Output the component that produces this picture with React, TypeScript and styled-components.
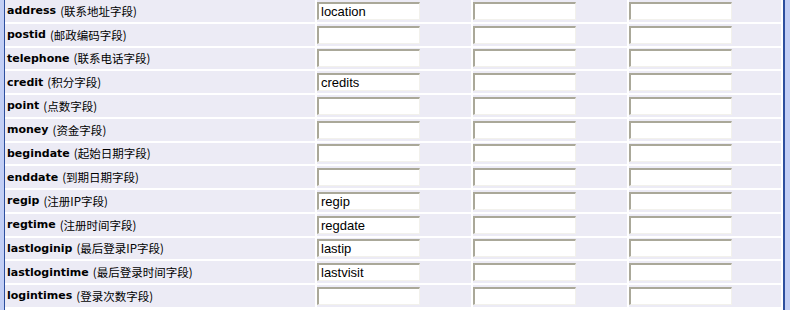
import React from 'react';
import styled, { createGlobalStyle } from 'styled-components';

const GlobalStyle = createGlobalStyle`
  html, body {
    margin: 0;
    padding: 0;
    background: #ffffff;
  }
`;

const Page = styled.div`
  width: 790px;
  height: 310px;
  overflow: hidden;
  box-sizing: border-box;
  background: #c3cff5;
  padding: 0 5px 0 4px;
`;

const Frame = styled.div`
  height: 100%;
  box-sizing: border-box;
  border-left: 1px solid #2d4f9e;
  border-right: 2px solid #2d4f9e;
  background: #ffffff;
`;

const Grid = styled.div`
  display: grid;
  grid-template-columns: 310px 154px 154px 152px;
  grid-auto-rows: 21.75px;
  column-gap: 2px;
  row-gap: 2px;
  padding-right: 1px;
`;

const LabelCell = styled.div`
  display: flex;
  align-items: center;
  padding-left: 2px;
  background: #ecebf5;
  color: #000000;
  white-space: nowrap;
`;

const Key = styled.span`
  font-family: "DejaVu Sans", Verdana, sans-serif;
  font-weight: bold;
  font-size: 11px;
`;

const Note = styled.span`
  margin-left: 4px;
  font-family: "Noto Sans CJK SC", "DejaVu Sans", sans-serif;
  font-size: 11.5px;
`;

const InputCell = styled.div`
  display: flex;
  align-items: center;
  background: #ecebf5;
`;

const Field = styled.input`
  box-sizing: border-box;
  width: 103px;
  height: 18px;
  margin: 0;
  padding: 0 2px;
  background: #ffffff;
  border-style: solid;
  border-width: 2px 1px 1px 2px;
  border-color: #aaa899 #f2f1ec #f2f1ec #aaa899;
  font-family: "Liberation Sans", Arial, sans-serif;
  font-size: 13px;
  color: #000000;
  outline: none;
`;

const rows: [string, string, string][] = [
  ['address', '联系地址字段', 'location'],
  ['postid', '邮政编码字段', ''],
  ['telephone', '联系电话字段', ''],
  ['credit', '积分字段', 'credits'],
  ['point', '点数字段', ''],
  ['money', '资金字段', ''],
  ['begindate', '起始日期字段', ''],
  ['enddate', '到期日期字段', ''],
  ['regip', '注册IP字段', 'regip'],
  ['regtime', '注册时间字段', 'regdate'],
  ['lastloginip', '最后登录IP字段', 'lastip'],
  ['lastlogintime', '最后登录时间字段', 'lastvisit'],
  ['logintimes', '登录次数字段', ''],
];

const App = () => {
  return (
    <>
      <GlobalStyle />
      <Page>
        <Frame>
          <Grid>
            {rows.map(([key, note, value]) => (
              <React.Fragment key={key}>
                <LabelCell>
                  <Key>{key}</Key>
                  <Note>({note})</Note>
                </LabelCell>
                <InputCell>
                  <Field type="text" defaultValue={value} />
                </InputCell>
                <InputCell>
                  <Field type="text" />
                </InputCell>
                <InputCell>
                  <Field type="text" />
                </InputCell>
              </React.Fragment>
            ))}
          </Grid>
        </Frame>
      </Page>
    </>
  );
};

export default App;
